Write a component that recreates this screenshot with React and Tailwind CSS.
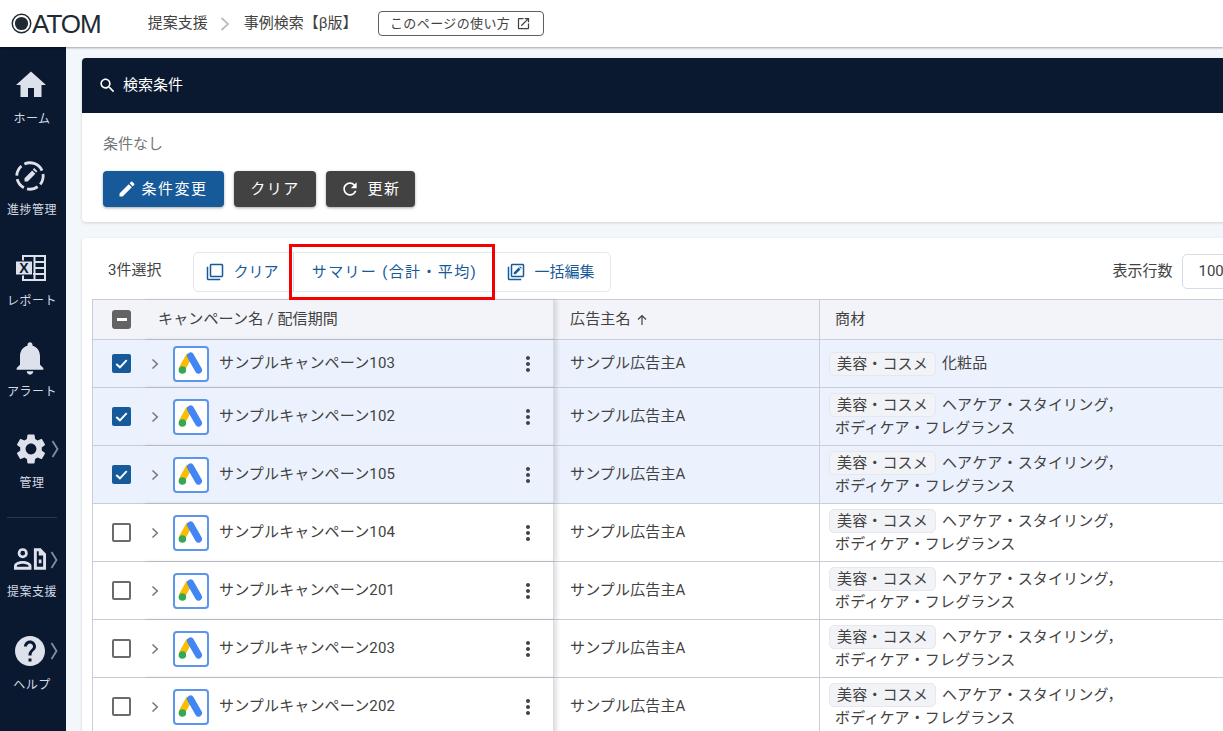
function MuiIcon({ d, className }) {
  return (
    <svg viewBox="0 0 24 24" fill="currentColor" className={className}>
      <path d={d} />
    </svg>
  );
}

const paths = {
  home: "M10 20v-6h4v6h5v-8h3L12 3 2 12h3v8z",
  edit: "M3 17.25V21h3.75L17.81 9.94l-3.75-3.75L3 17.25zM20.71 7.04c.39-.39.39-1.02 0-1.41l-2.34-2.34c-.39-.39-1.02-.39-1.41 0l-1.83 1.83 3.75 3.75 1.83-1.83z",
  search: "M15.5 14h-.79l-.28-.27C15.41 12.59 16 11.11 16 9.5 16 5.91 13.09 3 9.5 3S3 5.91 3 9.5 5.91 16 9.5 16c1.61 0 3.09-.59 4.23-1.57l.27.28v.79l5 4.99L20.49 19l-4.99-5zm-6 0C7.01 14 5 11.99 5 9.5S7.01 5 9.5 5 14 7.01 14 9.5 11.99 14 9.5 14z",
  refresh: "M17.65 6.35C16.2 4.9 14.21 4 12 4c-4.42 0-7.99 3.58-7.99 8s3.57 8 7.99 8c3.73 0 6.84-2.55 7.73-6h-2.08c-.82 2.33-3.04 4-5.65 4-3.31 0-6-2.69-6-6s2.69-6 6-6c1.66 0 3.14.69 4.22 1.78L13 11h7V4l-2.35 2.35z",
  bell: "M12 22c1.1 0 2-.9 2-2h-4c0 1.1.89 2 2 2zm6-6v-5c0-3.07-1.64-5.64-4.5-6.32V4c0-.83-.67-1.5-1.5-1.5s-1.5.67-1.5 1.5v.68C7.63 5.36 6 7.92 6 11v5l-2 2v1h16v-1l-2-2z",
  help: "M12 2C6.48 2 2 6.48 2 12s4.48 10 10 10 10-4.48 10-10S17.52 2 12 2zm1 17h-2v-2h2v2zm2.07-7.75l-.9.92C13.45 12.9 13 13.5 13 15h-2v-.5c0-1.1.45-2.1 1.17-2.83l1.24-1.26c.37-.36.59-.86.59-1.41 0-1.1-.9-2-2-2s-2 .9-2 2H8c0-2.21 1.79-4 4-4s4 1.79 4 4c0 .88-.36 1.68-.93 2.25z",
  gear: "M19.14 12.94c.04-.3.06-.61.06-.94 0-.32-.02-.64-.07-.94l2.03-1.58c.18-.14.23-.41.12-.61l-1.92-3.32c-.12-.22-.37-.29-.59-.22l-2.39.96c-.5-.38-1.03-.7-1.62-.94l-.36-2.54c-.04-.24-.24-.41-.48-.41h-3.84c-.24 0-.43.17-.47.41l-.36 2.54c-.59.24-1.13.57-1.62.94l-2.39-.96c-.22-.08-.47 0-.59.22L2.74 8.87c-.12.21-.08.47.12.61l2.03 1.58c-.05.3-.09.63-.09.94s.02.64.07.94l-2.03 1.58c-.18.14-.23.41-.12.61l1.92 3.32c.12.22.37.29.59.22l2.39-.96c.5.38 1.03.7 1.62.94l.36 2.54c.05.24.24.41.48.41h3.84c.24 0 .44-.17.47-.41l.36-2.54c.59-.24 1.13-.56 1.62-.94l2.39.96c.22.08.47 0 .59-.22l1.92-3.32c.12-.22.07-.47-.12-.61l-2.01-1.58zM12 15.6c-1.98 0-3.6-1.62-3.6-3.6s1.62-3.6 3.6-3.6 3.6 1.62 3.6 3.6-1.62 3.6-3.6 3.6z",
  more: "M12 8c1.1 0 2-.9 2-2s-.9-2-2-2-2 .9-2 2 .9 2 2 2zm0 2c-1.1 0-2 .9-2 2s.9 2 2 2 2-.9 2-2-.9-2-2-2zm0 6c-1.1 0-2 .9-2 2s.9 2 2 2 2-.9 2-2-.9-2-2-2z",
  copy: "M3 5H1v16c0 1.1.9 2 2 2h16v-2H3V5zm18-4H7c-1.1 0-2 .9-2 2v14c0 1.1.9 2 2 2h14c1.1 0 2-.9 2-2V3c0-1.1-.9-2-2-2zm0 16H7V3h14v14z",
  open: "M19 19H5V5h7V3H5c-1.11 0-2 .9-2 2v14c0 1.1.89 2 2 2h14c1.1 0 2-.9 2-2v-7h-2v7zM14 3v2h3.59l-9.83 9.83 1.41 1.41L19 6.41V10h2V3h-7z",
};

function ProgressIcon({ className }) {
  return (
    <svg viewBox="0 0 32 32" className={className} fill="none">
      <circle cx="16" cy="16" r="13.2" stroke="currentColor" strokeWidth="2.8" strokeDasharray="11 3.5" transform="rotate(-72 16 16)" />
      <path d="M10.5 21.5v-3.2l7.700-7.700 3.200 3.200-7.700 7.700z M18.900 9.400l1.300-1.300 3.200 3.200-1.300 1.300z" fill="currentColor" />
    </svg>
  );
}

function ExcelIcon({ className }) {
  return (
    <svg viewBox="0 0 32 32" className={className}>
      <g fill="none" stroke="currentColor" strokeWidth="2">
        <rect x="9" y="5" width="22" height="24" />
        <path d="M20.500 5v24 M20.500 11h10.500 M20.500 17h10.500 M20.500 23h10.500 M9 23h11" />
      </g>
      <rect x="1.500" y="10" width="17" height="14" fill="currentColor" stroke="#0a1930" strokeWidth="1" />
      <text x="10" y="22" fontSize="14" fontWeight="700" textAnchor="middle" fill="#0a1930" fontFamily="Liberation Sans, sans-serif">X</text>
    </svg>
  );
}

function ProposalIcon({ className }) {
  return (
    <svg viewBox="0 0 34 24" className={className}>
      <circle cx="9" cy="6" r="3.800" fill="none" stroke="currentColor" strokeWidth="2.800" />
      <path d="M0 23v-4c0-3 5-5 9-5s9 2 9 5v4z M3 20h12v-1c0-.8-3-2-6-2s-6 1.200-6 2z" fill="currentColor" fillRule="evenodd" />
      <path d="M20.500 1h7l5.500 5.500V23H20.500z M23.500 4v16h6.500V8.500h-4.500V4z M25.500 12.500h2.800v4h-2.800z" fill="currentColor" fillRule="evenodd" />
    </svg>
  );
}

function BulkEditIcon({ className }) {
  return (
    <svg viewBox="0 0 24 24" className={className} fill="currentColor">
      <path d="M3 5H1v16c0 1.100.9 2 2 2h16v-2H3V5zm18-4H7c-1.100 0-2 .9-2 2v14c0 1.100.9 2 2 2h14c1.100 0 2-.9 2-2V3c0-1.100-.9-2-2-2zm0 16H7V3h14v14z" />
      <path d="M9 15v-2.500l6.500-6.500 2.500 2.500-6.500 6.500z M16.300 5.200l1-1 2.500 2.500-1 1z" />
    </svg>
  );
}

function AdsLogo() {
  return (
    <div className="w-9 h-9 shrink-0 rounded-[4px] border-2 border-[#5c94ee] bg-white flex items-center justify-center">
      <svg viewBox="0 0 32 32" className="w-[30px] h-[30px]">
        <path d="M14.500 6.500 L6.500 21" stroke="#fbbc04" strokeWidth="7" strokeLinecap="butt" />
        <path d="M15.500 7.500 L24 22.500" stroke="#4285f4" strokeWidth="7.500" strokeLinecap="round" />
        <circle cx="6.800" cy="22.400" r="4" fill="#34a853" />
      </svg>
    </div>
  );
}

function SideItem({ icon, label, chevron, mb = "mb-[34px]" }) {
  return (
    <div className={`flex flex-col items-center h-[57px] ${mb}`}>
      <div className="relative h-8 w-8 mr-[3px] flex items-center justify-center text-[#dde1ec]">
        {icon}
        {chevron && (
          <svg viewBox="0 0 8 20" className="absolute left-[36px] top-[6px] w-[8px] h-[20px] text-[#868e9c]" fill="none" stroke="currentColor" strokeWidth="1.800">
            <path d="M1.500 2 L6.500 10 L1.500 18" />
          </svg>
        )}
      </div>
      <div className="mt-[10px] h-[17px] leading-[17px] text-[12px] tracking-[0.04em] text-[#d5d9e2] whitespace-nowrap">{label}</div>
    </div>
  );
}

function Sidebar() {
  return (
    <aside className="w-[66px] shrink-0 bg-[#0a1930] pt-[22px] pr-[2px] flex flex-col items-center">
      <SideItem icon={<MuiIcon d={paths.home} className="w-9 h-9 shrink-0" />} label="ホーム" />
      <SideItem icon={<ProgressIcon className="w-8 h-8 shrink-0" />} label="進捗管理" />
      <SideItem icon={<ExcelIcon className="w-8 h-8 shrink-0" />} label="レポート" />
      <SideItem icon={<MuiIcon d={paths.bell} className="w-10 h-10 shrink-0" />} label="アラート" />
      <SideItem icon={<MuiIcon d={paths.gear} className="w-9 h-9 shrink-0" />} label="管理" chevron mb="mb-[27px]" />
      <div className="w-[50px] h-px bg-[#2a364a] mb-[26px]" />
      <SideItem icon={<ProposalIcon className="w-[33px] h-6 shrink-0" />} label="提案支援" chevron />
      <SideItem icon={<MuiIcon d={paths.help} className="w-9 h-9 shrink-0" />} label="ヘルプ" chevron />
    </aside>
  );
}

function Checkbox({ state }) {
  if (state === "off") {
    return <div className="w-[19px] h-[19px] rounded-[2px] border-2 border-[#6b6b6b] bg-white" />;
  }
  if (state === "mixed") {
    return (
      <div className="w-[19px] h-[19px] rounded-[3px] bg-[#636363] flex items-center justify-center">
        <div className="w-[10px] h-[2.5px] bg-white" />
      </div>
    );
  }
  return (
    <div className="w-[19px] h-[19px] rounded-[2px] bg-[#175a9a] flex items-center justify-center">
      <svg viewBox="0 0 20 20" className="w-[19px] h-[19px]" fill="none" stroke="white" strokeWidth="2">
        <path d="M4.500 10.500 L8.300 14 L15.500 6.500" />
      </svg>
    </div>
  );
}

const rows = [
  { name: "サンプルキャンペーン103", sel: true, single: true },
  { name: "サンプルキャンペーン102", sel: true },
  { name: "サンプルキャンペーン105", sel: true },
  { name: "サンプルキャンペーン104" },
  { name: "サンプルキャンペーン201" },
  { name: "サンプルキャンペーン203" },
  { name: "サンプルキャンペーン202" },
];

function Tag() {
  return (
    <span className="inline-block h-[24px] leading-[22px] px-[7px] mr-[6px] rounded-[5px] border border-[#e6e8ee] bg-[#f2f3f7]">
      美容・コスメ
    </span>
  );
}

function Row({ row }) {
  const bg = row.sel ? "bg-[#ebf2fd]" : "bg-white";
  return (
    <div className={`flex border-t border-[#c9cdd8] text-[15px] tracking-[0.01em] text-[#424242] ${row.single ? "h-[48px]" : "h-[58px]"} ${bg}`}>
      <div className="w-[49px] shrink-0 flex items-center pl-[19px]">
        <Checkbox state={row.sel ? "on" : "off"} />
      </div>
      <div className={`w-[412px] shrink-0 flex items-center shadow-[3px_0_4px_rgba(0,0,0,0.12)] border-r border-[#d8dbe3] ${bg}`}>
        <svg viewBox="0 0 8 12" className="ml-[9px] w-[8px] h-[12px] text-[#757575]" fill="none" stroke="currentColor" strokeWidth="1.500">
          <path d="M1.500 1.500 L6.300 6 L1.500 10.500" />
        </svg>
        <div className="ml-[14px]"><AdsLogo /></div>
        <span className="ml-[10px] flex-1 whitespace-nowrap">{row.name}</span>
        <MuiIcon d={paths.more} className="w-6 h-6 mr-[13px] text-[#424242]" />
      </div>
      <div className="w-[266px] shrink-0 flex items-center pl-4 border-r border-[#c9cdd8]">サンプル広告主A</div>
      <div className="w-[400px] shrink-0 pl-[9px] flex flex-col justify-center">
        {row.single ? (
          <div className="flex items-center"><Tag /><span>化粧品</span></div>
        ) : (
          <>
            <div className="flex items-center"><Tag /><span>ヘアケア・スタイリング，</span></div>
            <div className="pl-[6px] leading-[23px]">ボディケア・フレグランス</div>
          </>
        )}
      </div>
    </div>
  );
}

export default function App() {
  return (
    <div className="h-screen w-full overflow-hidden flex flex-col bg-[#f3f6fb]" style={{ fontFamily: '"Roboto", "Noto Sans CJK JP", sans-serif' }}>
      {/* Header */}
      <header className="h-[47px] shrink-0 bg-white flex items-center shadow-[0_1px_2px_rgba(0,0,0,0.35)] z-10 text-[#424242]">
        <div className="ml-[11px] flex items-center text-[#222b33]">
          <svg viewBox="0 0 20 20" className="w-[21px] h-[21px]">
            <circle cx="10" cy="10" r="8.800" fill="none" stroke="currentColor" strokeWidth="1.400" />
            <circle cx="10" cy="10" r="6.300" fill="currentColor" />
          </svg>
          <span className="text-[26px] tracking-[-1px] leading-none mt-[1px]" style={{ fontFamily: '"Liberation Sans", sans-serif' }}>ATOM</span>
        </div>
        <span className="ml-[47px] text-[15px]">提案支援</span>
        <svg viewBox="0 0 10 14" className="ml-[12px] w-[10px] h-[14px] text-[#bdbdbd]" fill="none" stroke="currentColor" strokeWidth="1.800">
          <path d="M1.500 1 L8 7 L1.500 13" />
        </svg>
        <span className="ml-[14px] text-[15px]">事例検索【β版】</span>
        <div className="ml-[20px] h-[25px] w-[166px] rounded-[4px] border border-[#5f5f5f] flex items-center justify-center text-[13px] tracking-[0.03em]">
          このページの使い方
          <MuiIcon d={paths.open} className="ml-[6px] w-[15px] h-[15px]" />
        </div>
      </header>

      <div className="flex flex-1 min-h-0">
        <Sidebar />
        <main className="flex-1 min-w-0 overflow-hidden pl-4 pt-[11px]">
          {/* Search conditions */}
          <section className="w-[1300px] h-[164px] bg-white rounded-[4px] shadow-[0_1px_3px_rgba(0,0,0,0.15)] overflow-hidden">
            <div className="h-[55px] bg-[#0a1930] flex items-center pl-[16px] text-white">
              <MuiIcon d={paths.search} className="w-[19px] h-[19px]" />
              <span className="ml-[6px] text-[15px]">検索条件</span>
            </div>
            <div className="pl-[21px]">
              <div className="pt-[21px] text-[15px] leading-[20px] text-[#757575]">条件なし</div>
              <div className="mt-[17px] flex gap-[10px] text-white text-[15px] tracking-[0.1em]">
                <button className="h-9 w-[121px] rounded-[4px] bg-[#175a9a] shadow-[0_1px_3px_rgba(0,0,0,0.35)] flex items-center justify-center">
                  <MuiIcon d={paths.edit} className="w-5 h-5 mr-[4px] -ml-[2px]" />条件変更
                </button>
                <button className="h-9 w-[82px] rounded-[4px] bg-[#424242] shadow-[0_1px_3px_rgba(0,0,0,0.35)]">クリア</button>
                <button className="h-9 w-[89px] rounded-[4px] bg-[#424242] shadow-[0_1px_3px_rgba(0,0,0,0.35)] flex items-center justify-center">
                  <MuiIcon d={paths.refresh} className="w-5 h-5 mr-[7px]" />更新
                </button>
              </div>
            </div>
          </section>

          {/* Results */}
          <section className="mt-4 w-[1300px] bg-white rounded-[4px] shadow-[0_1px_3px_rgba(0,0,0,0.15)] pl-[10px] h-[600px]">
            <div className="h-[61px] flex items-center">
              <span className="ml-[16px] mt-[3px] text-[15px] text-[#424242]">3件選択</span>
              <div className="ml-[32px] mt-[7px] h-[40px] flex rounded-[5px] border border-[#e6e8ee] text-[15px] text-[#175a9a]">
                <div className="w-[100px] flex items-center justify-center pr-[3px] border-r border-[#d8dbe3]">
                  <MuiIcon d={paths.copy} className="w-[18px] h-[18px] mr-[9px]" />クリア
                </div>
                <div className="relative w-[200px] flex items-center justify-center tracking-[0.09em]">
                  サマリー (合計・平均)
                  <div className="absolute left-[-5px] right-[-1px] top-[-9px] bottom-[-9px] border-[3px] border-[#f50000]" />
                </div>
                <div className="w-[116px] flex items-center justify-center pr-[3px]">
                  <BulkEditIcon className="w-[18px] h-[18px] mr-[9px]" />一括編集
                </div>
              </div>
              <div className="ml-[501px] mt-[5px] text-[15px] text-[#424242]">表示行数</div>
              <div className="ml-[10px] mt-[6px] h-[35px] w-[100px] pl-[15px] flex items-center rounded-[5px] border border-[#d8dbe3] text-[15px] text-[#424242]">100</div>
            </div>
            <div className="border-l border-[#c9cdd8]">
              <div className="flex h-[40px] bg-[#f2f4f9] text-[15px] tracking-[0.01em] text-[#424242] border-t border-[#c9cdd8]">
                <div className="w-[49px] shrink-0 flex items-center pl-[19px]"><Checkbox state="mixed" /></div>
                <div className="w-[412px] shrink-0 flex items-center pl-[16px] shadow-[3px_0_4px_rgba(0,0,0,0.12)] border-r border-[#d8dbe3]">キャンペーン名 / 配信期間</div>
                <div className="w-[266px] shrink-0 flex items-center pl-4 border-r border-[#c9cdd8]">
                  広告主名
                  <svg viewBox="0 0 12 12" className="ml-[5px] w-3 h-3" fill="none" stroke="currentColor" strokeWidth="1.200">
                    <path d="M6 11V1.500 M2 5.500 L6 1.500 L10 5.500" />
                  </svg>
                </div>
                <div className="flex items-center pl-[15px]">商材</div>
              </div>
              {rows.map((r) => <Row key={r.name} row={r} />)}
            </div>
          </section>
        </main>
      </div>
    </div>
  );
}
